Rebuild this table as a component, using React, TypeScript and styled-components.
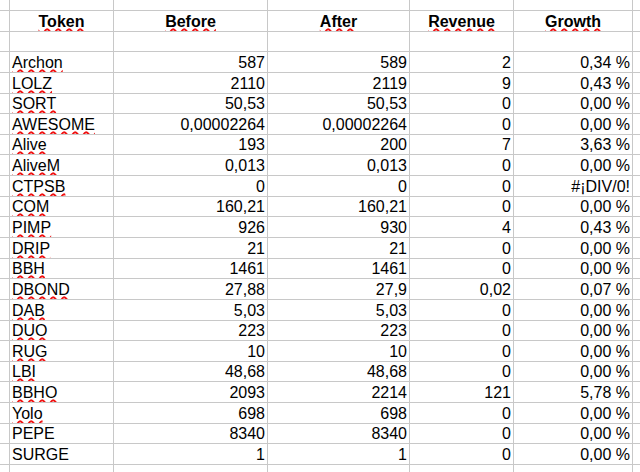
import React from "react";
import styled, { createGlobalStyle } from "styled-components";

const GlobalStyle = createGlobalStyle`
    html, body {
        margin: 0;
        padding: 0;
        background: #fff;
        overflow: hidden;
    }
    body {
        font-family: "Liberation Sans", Arial, sans-serif;
    }
`;

// grid line positions taken from the sheet
const rowLines = [10, 31, 51, 72, 93, 113, 134, 154, 175, 196, 216, 237, 258, 278, 299, 320, 340, 361, 381, 402, 423, 443, 464];
const rowHeights = rowLines.map((y, i) => (i === 0 ? y + 1 : y - rowLines[i - 1])).concat([20]);

const Sheet = styled.div`
    display: grid;
    grid-template-columns: 10px 104px 154px 142px 104px 119px 20px;
    grid-template-rows: ${rowHeights.map(h => `${h}px`).join(" ")};
    width: 640px;
    height: 472px;
    overflow: hidden;
    background: #fff;
`;

const Cell = styled.div<{ $align?: "left" | "right" | "center"; $bold?: boolean }>`
    display: flex;
    align-items: flex-end;
    justify-content: ${p => (p.$align === "right" ? "flex-end" : p.$align === "center" ? "center" : "flex-start")};
    box-sizing: border-box;
    border-right: 1px solid #c8c8c8;
    border-bottom: 1px solid #c8c8c8;
    padding: 0 2px;
    font-size: 16px;
    line-height: 18px;
    font-weight: ${p => (p.$bold ? 700 : 400)};
    color: #000;
    white-space: nowrap;
    overflow: hidden;
`;

const Spell = styled.span`
    text-decoration: underline wavy #f01010;
    text-decoration-thickness: 1.5px;
    text-decoration-skip-ink: none;
    text-underline-offset: 1px;
`;

interface IRow {
    token: string,
    before: string,
    after: string,
    revenue: string,
    growth: string,
    spell: boolean,
}

const data: Array<IRow> = [
    { token: "Archon", before: "587", after: "589", revenue: "2", growth: "0,34 %", spell: true },
    { token: "LOLZ", before: "2110", after: "2119", revenue: "9", growth: "0,43 %", spell: true },
    { token: "SORT", before: "50,53", after: "50,53", revenue: "0", growth: "0,00 %", spell: true },
    { token: "AWESOME", before: "0,00002264", after: "0,00002264", revenue: "0", growth: "0,00 %", spell: true },
    { token: "Alive", before: "193", after: "200", revenue: "7", growth: "3,63 %", spell: true },
    { token: "AliveM", before: "0,013", after: "0,013", revenue: "0", growth: "0,00 %", spell: true },
    { token: "CTPSB", before: "0", after: "0", revenue: "0", growth: "#¡DIV/0!", spell: true },
    { token: "COM", before: "160,21", after: "160,21", revenue: "0", growth: "0,00 %", spell: true },
    { token: "PIMP", before: "926", after: "930", revenue: "4", growth: "0,43 %", spell: true },
    { token: "DRIP", before: "21", after: "21", revenue: "0", growth: "0,00 %", spell: true },
    { token: "BBH", before: "1461", after: "1461", revenue: "0", growth: "0,00 %", spell: true },
    { token: "DBOND", before: "27,88", after: "27,9", revenue: "0,02", growth: "0,07 %", spell: true },
    { token: "DAB", before: "5,03", after: "5,03", revenue: "0", growth: "0,00 %", spell: true },
    { token: "DUO", before: "223", after: "223", revenue: "0", growth: "0,00 %", spell: true },
    { token: "RUG", before: "10", after: "10", revenue: "0", growth: "0,00 %", spell: true },
    { token: "LBI", before: "48,68", after: "48,68", revenue: "0", growth: "0,00 %", spell: true },
    { token: "BBHO", before: "2093", after: "2214", revenue: "121", growth: "5,78 %", spell: true },
    { token: "Yolo", before: "698", after: "698", revenue: "0", growth: "0,00 %", spell: true },
    { token: "PEPE", before: "8340", after: "8340", revenue: "0", growth: "0,00 %", spell: false },
    { token: "SURGE", before: "1", after: "1", revenue: "0", growth: "0,00 %", spell: false },
];

const headers = ["Token", "Before", "After", "Revenue", "Growth"];

const EmptyRow: React.FC<{ cols?: number }> = ({ cols = 7 }) => (
    <React.Fragment>
        {Array.from({ length: cols }).map((_, i) => <Cell key={i} />)}
    </React.Fragment>
);

const App: React.FC = () => {
    return (
        <React.Fragment>
            <GlobalStyle />
            <Sheet>
                <EmptyRow />

                <Cell />
                {headers.map(h => (
                    <Cell key={h} $align="center" $bold>
                        <Spell>{h}</Spell>
                    </Cell>
                ))}
                <Cell />

                <EmptyRow />

                {data.map(row => (
                    <React.Fragment key={row.token}>
                        <Cell />
                        <Cell>{row.spell ? <Spell>{row.token}</Spell> : row.token}</Cell>
                        <Cell $align="right">{row.before}</Cell>
                        <Cell $align="right">{row.after}</Cell>
                        <Cell $align="right">{row.revenue}</Cell>
                        <Cell $align="right">{row.growth}</Cell>
                        <Cell />
                    </React.Fragment>
                ))}

                <EmptyRow />
            </Sheet>
        </React.Fragment>
    );
};

export default App;
